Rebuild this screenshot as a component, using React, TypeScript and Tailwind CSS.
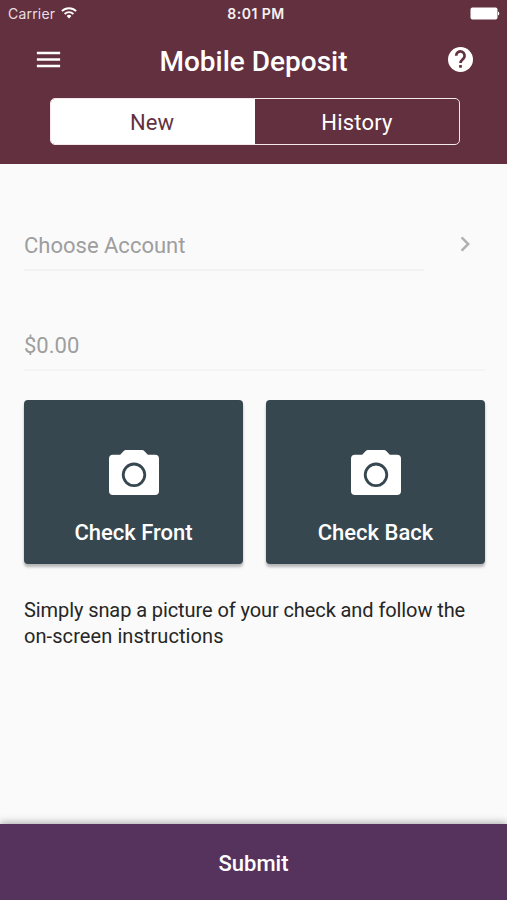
import { useState } from "react";
import { MdMenu, MdChevronRight } from "react-icons/md";

function StatusBar() {
  return (
    <div className="h-7 pl-2 pr-[7px] grid grid-cols-[1fr_auto_1fr] items-center text-[14px] leading-7">
      <div className="flex items-center gap-[6px]">
        <span className="font-['Inter',sans-serif] text-[#e9dfe2] tracking-[0.2px]">Carrier</span>
        <svg width="16" height="12" viewBox="0 0 16 12" fill="none" stroke="#fff" strokeWidth="1.8" className="-mt-[2px]">
          <path d="M0.9 4.2a10 10 0 0 1 14.2 0" />
          <path d="M3.6 7a6.2 6.2 0 0 1 8.8 0" />
          <path d="M8 11.4 5.6 8.9a3.4 3.4 0 0 1 4.8 0z" fill="#fff" stroke="none" />
        </svg>
      </div>
      <span className="pl-1 font-['Inter',sans-serif] text-[14px] font-semibold tracking-[0.5px] text-[#f6f0f2]">
        8:01 PM
      </span>
      <svg className="justify-self-end -mt-px" width="30" height="13" viewBox="0 0 30 13" fill="#fff">
        <rect x="0.5" y="0.5" width="27" height="12" rx="2" />
        <path d="M28 4.6c1.8.6 1.8 3.4 0 4z" />
      </svg>
    </div>
  );
}

function HelpIcon() {
  return (
    <svg width="25" height="25" viewBox="0 0 25 25" className="-mt-1 mr-[3px]">
      <circle cx="12.5" cy="12.5" r="12.5" fill="#fff" />
      <path
        d="M8.2 8.7a4.2 4.2 0 1 1 7.3 2.8c-1.7 1.6-3 2.4-3 4.5"
        fill="none"
        stroke="#63303f"
        strokeWidth="2.7"
      />
      <rect x="11.1" y="18" width="2.8" height="2.8" rx="0.5" fill="#63303f" />
    </svg>
  );
}

function CameraIcon() {
  return (
    <svg width="50" height="45" viewBox="0 0 50 45">
      <path
        fill="#fff"
        d="M17.2 0h15.6a3.5 3.5 0 0 1 2.7 1.200L38.8 4.800H46a4 4 0 0 1 4 4V41a4 4 0 0 1-4 4H4a4 4 0 0 1-4-4V8.800a4 4 0 0 1 4-4h7.200L14.500 1.200a3.500 3.500 0 0 1 2.700-1.200z"
      />
      <circle cx="25" cy="24.8" r="10.8" fill="none" stroke="#37474f" strokeWidth="2.8" />
    </svg>
  );
}

function CheckButton({ label }: { label: string }) {
  return (
    <button
      type="button"
      className="h-[164px] flex-1 flex flex-col items-center rounded-[4px] bg-[#37474f] pt-[50px] text-white shadow-[0_3px_3px_rgba(0,0,0,0.28)]"
    >
      <CameraIcon />
      <span className="mt-[23px] text-[22px] leading-[30px] font-medium">{label}</span>
    </button>
  );
}

export default function App() {
  const [tab, setTab] = useState("new");

  return (
    <div className="w-full h-[900px] flex flex-col overflow-hidden bg-[#fafafa] font-['Roboto',sans-serif]">
      <header className="h-[164px] shrink-0 bg-[#63303f] text-white">
        <StatusBar />
        <div className="h-[66px] flex items-center justify-between pl-[33px] pr-[31px]">
          <MdMenu size={31} className="-mt-1" />
          <h1 className="pt-[2px] pr-[5px] text-[28px] leading-9 font-medium">Mobile Deposit</h1>
          <HelpIcon />
        </div>
        <div className="mt-1 ml-[50px] w-[410px] h-[47px] grid grid-cols-2 overflow-hidden rounded-[5px] border-[1.5px] border-[#f3e9ec] text-[22px]">
          <button
            type="button"
            onClick={() => setTab("new")}
            className={tab === "new" ? "pt-[2px] pr-[2px] bg-white text-[#63303f]" : "pt-[2px] pr-[2px]"}
          >
            New
          </button>
          <button
            type="button"
            onClick={() => setTab("history")}
            className={tab === "history" ? "pt-[2px] bg-white text-[#63303f]" : "pt-[2px] tracking-[0.2px]"}
          >
            History
          </button>
        </div>
      </header>

      <main className="flex-1 px-6 pt-[56px]">
        <div className="flex">
          <div className="w-[400px] h-[51px] pt-[11px] border-b-2 border-[#f2f2f2] text-[22px] leading-[30px] text-[#9e9e9e]">
            Choose Account
          </div>
          <MdChevronRight size={30} className="ml-[26px] mt-[9px] text-[#b0b0b0]" />
        </div>
        <div className="mt-[49px] w-[461px] h-[51px] pt-[11px] border-b-2 border-[#f4f4f4] text-[22px] leading-[30px] text-[#9e9e9e]">
          $0.00
        </div>
        <div className="mt-[29px] w-[461px] flex gap-[23px]">
          <CheckButton label="Check Front" />
          <CheckButton label="Check Back" />
        </div>
        <p className="mt-[33px] text-[20px] leading-[26px] tracking-[-0.09px] text-[#262626]">
          Simply snap a picture of your check and follow the{" "}
          <span className="tracking-[0.08px]">on-screen instructions</span>
        </p>
      </main>

      <button
        type="button"
        className="h-[76px] shrink-0 bg-[#56335c] pt-[2px] text-[22px] font-medium text-white shadow-[0_-1px_8px_rgba(0,0,0,0.35)]"
      >
        Submit
      </button>
    </div>
  );
}
